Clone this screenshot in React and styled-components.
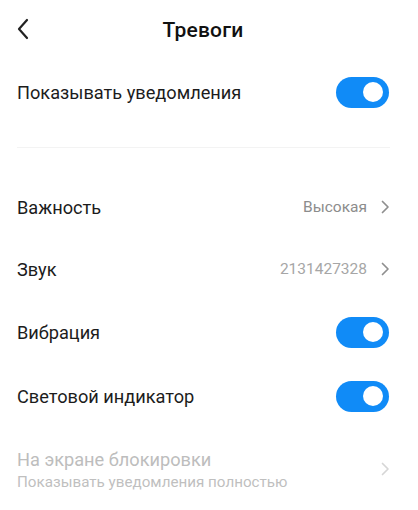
import React from "react";
import styled, { createGlobalStyle } from "styled-components";

const GlobalStyle = createGlobalStyle`
  html, body {
    margin: 0;
    padding: 0;
    background: #ffffff;
  }
  body {
    font-family: Roboto, "Noto Sans", sans-serif;
    -webkit-font-smoothing: antialiased;
  }
`;

const Page = styled.div`
  width: 418px;
  min-height: 510px;
  background: #ffffff;
  color: #1c1c1c;
`;

const Header = styled.header`
  position: relative;
  height: 60px;
  display: flex;
  align-items: center;
  justify-content: center;
`;

const Back = styled.button`
  position: absolute;
  left: 12px;
  top: 17px;
  width: 22px;
  height: 24px;
  padding: 0;
  border: none;
  background: none;
  display: flex;
  align-items: center;
  justify-content: center;
`;

const Title = styled.h1`
  margin: 0;
  font-size: 21px;
  font-weight: 500;
  letter-spacing: 0.2px;
  color: #111;
  transform: translateX(-6px);
`;

const Row = styled.div`
  height: ${(p) => p.$h || 62}px;
  padding: 0 28px 0 17px;
  display: flex;
  align-items: center;
  justify-content: space-between;
`;

const Texts = styled.div`
  display: flex;
  flex-direction: column;
  gap: 3px;
  padding-top: 2px;
`;

const Label = styled.span`
  font-size: 18.2px;
  color: ${(p) => (p.$disabled ? "#bdbdbd" : "#1c1c1c")};
`;

const Hint = styled.span`
  font-size: 15.2px;
  color: #bfbfbf;
`;

const Side = styled.div`
  display: flex;
  align-items: center;
  gap: 13px;
`;

const Value = styled.span`
  font-size: 15.5px;
  color: ${(p) => (p.$light ? "#a6a6a6" : "#8c8c8c")};
`;

const Divider = styled.hr`
  margin: 23px 28px 28px 17px;
  border: none;
  height: 1px;
  background: #f3f3f3;
`;

const Toggle = styled.span`
  width: 53px;
  height: 31px;
  border-radius: 16px;
  background: #108bf7;
  display: flex;
  align-items: center;
  justify-content: flex-end;
  padding-right: 6px;
  box-sizing: border-box;
  margin-right: 1px;

  &::after {
    content: "";
    width: 20px;
    height: 20px;
    border-radius: 50%;
    background: #ffffff;
  }
`;

const Chevron = ({ color = "#8f8f8f" }) => (
  <svg width="10" height="14" viewBox="0 0 10 14">
    <path
      d="M2.5 1.5 L8 7 L2.5 12.5"
      fill="none"
      stroke={color}
      strokeWidth="1.7"
      strokeLinecap="round"
      strokeLinejoin="round"
    />
  </svg>
);

const App = () => (
  <Page>
    <GlobalStyle />
    <Header>
      <Back aria-label="Назад">
        <svg width="14" height="22" viewBox="0 0 14 22">
          <path
            d="M11 2 L3 11 L11 20"
            fill="none"
            stroke="#222"
            strokeWidth="2.2"
            strokeLinecap="round"
            strokeLinejoin="round"
          />
        </svg>
      </Back>
      <Title>Тревоги</Title>
    </Header>

    <Row $h={64}>
      <Label>Показывать уведомления</Label>
      <Toggle />
    </Row>

    <Divider />

    <Row>
      <Label>Важность</Label>
      <Side>
        <Value>Высокая</Value>
        <Chevron />
      </Side>
    </Row>
    <Row>
      <Label>Звук</Label>
      <Side>
        <Value $light>2131427328</Value>
        <Chevron />
      </Side>
    </Row>
    <Row $h={64}>
      <Label>Вибрация</Label>
      <Toggle />
    </Row>
    <Row $h={64}>
      <Label>Световой индикатор</Label>
      <Toggle />
    </Row>
    <Row $h={82}>
      <Texts>
        <Label $disabled>На экране блокировки</Label>
        <Hint>Показывать уведомления полностью</Hint>
      </Texts>
      <Chevron color="#d6d6d6" />
    </Row>
  </Page>
);

export default App;
